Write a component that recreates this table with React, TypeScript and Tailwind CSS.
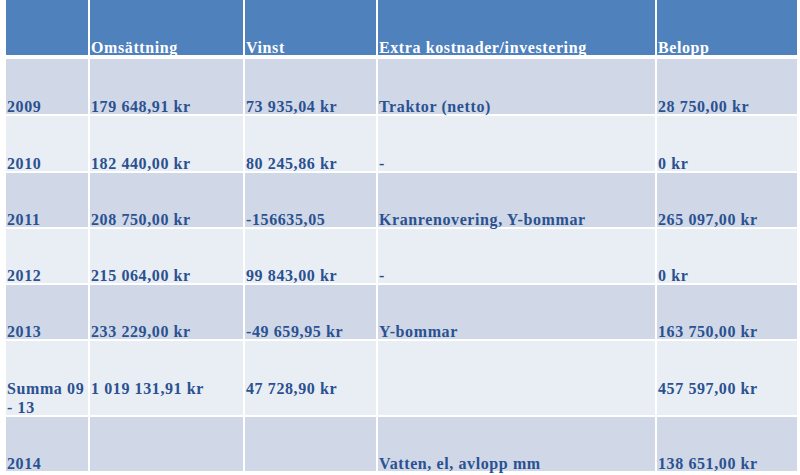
import React from "react";

type Row = { cells: string[]; h: string; bg: string; summa?: boolean };

const rows: Row[] = [
  { cells: ["2009", "179 648,91 kr", "73 935,04 kr", "Traktor (netto)", "28 750,00 kr"], h: "h-[55px]", bg: "bg-[#d0d8e8]" },
  { cells: ["2010", "182 440,00 kr", "80 245,86 kr", "-", "0 kr"], h: "h-[55px]", bg: "bg-[#e9edf4]" },
  { cells: ["2011", "208 750,00 kr", "-156635,05", "Kranrenovering, Y-bommar", "265 097,00 kr"], h: "h-[54px]", bg: "bg-[#d0d8e8]" },
  { cells: ["2012", "215 064,00 kr", "99 843,00 kr", "-", "0 kr"], h: "h-[54px]", bg: "bg-[#e9edf4]" },
  { cells: ["2013", "233 229,00 kr", "-49 659,95 kr", "Y-bommar", "163 750,00 kr"], h: "h-[54px]", bg: "bg-[#d0d8e8]" },
  { cells: ["Summa 09 - 13", "1 019 131,91 kr", "47 728,90 kr", "", "457 597,00 kr"], h: "h-[74px]", bg: "bg-[#e9edf4]", summa: true },
  { cells: ["2014", "", "", "Vatten, el, avlopp mm", "138 651,00 kr"], h: "h-[54px]", bg: "bg-[#d0d8e8]" },
];

const widths = ["w-[82px]", "w-[153px]", "w-[131px]", "w-[277px]", "w-[140px]"];
const header = ["", "Omsättning", "Vinst", "Extra kostnader/investering", "Belopp"];

const font = { fontFamily: '"Liberation Serif", "Times New Roman", serif' };

export default function App() {
  return (
    <div className="w-[800px] h-[475px] bg-white overflow-hidden text-[16px] font-bold tracking-[0.6px]" style={font}>
      <div className="flex flex-col gap-[2px] pl-[6px]">
        <div className="flex gap-[2px] h-[55px] mb-[2px]">
          {header.map((t, i) => (
            <div key={i} className={`${widths[i]} shrink-0 bg-[#4f81bd] flex items-end pl-[1px] text-white`}>
              <span className="leading-[19px] mb-[-1.5px]">{t}</span>
            </div>
          ))}
        </div>
        {rows.map((r, ri) => (
          <div key={ri} className={`flex gap-[2px] ${r.h}`}>
            {r.cells.map((t, i) => (
              <div
                key={i}
                className={`${widths[i]} shrink-0 ${r.bg} flex items-end pl-[1px] text-[#2a5190] ${r.summa && i !== 0 ? "pb-[19px]" : ""}`}
              >
                <span className="leading-[19px] mb-[-1.5px]">{t}</span>
              </div>
            ))}
          </div>
        ))}
      </div>
    </div>
  );
}
